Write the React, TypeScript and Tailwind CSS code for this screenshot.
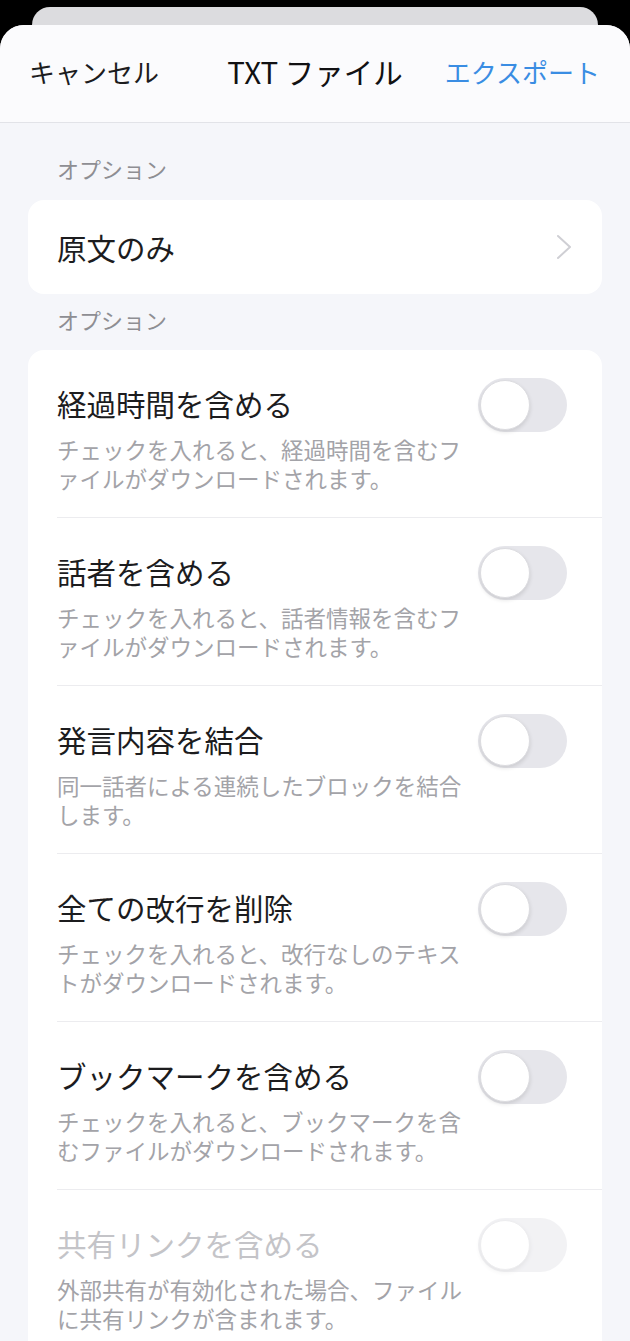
const FONT = { fontFamily: '"Noto Sans CJK JP", "Noto Sans", sans-serif' };

interface Option {
  title: string;
  desc: string;
  disabled?: boolean;
}

const options: Option[] = [
  { title: "経過時間を含める", desc: "チェックを入れると、経過時間を含むファイルがダウンロードされます。" },
  { title: "話者を含める", desc: "チェックを入れると、話者情報を含むファイルがダウンロードされます。" },
  { title: "発言内容を結合", desc: "同一話者による連続したブロックを結合します。" },
  { title: "全ての改行を削除", desc: "チェックを入れると、改行なしのテキストがダウンロードされます。" },
  { title: "ブックマークを含める", desc: "チェックを入れると、ブックマークを含むファイルがダウンロードされます。" },
  { title: "共有リンクを含める", desc: "外部共有が有効化された場合、ファイルに共有リンクが含まれます。", disabled: true },
];

function Toggle({ disabled }: { disabled?: boolean }) {
  return (
    <div
      className={`w-[89px] h-[54px] rounded-full bg-[#e6e6eb] p-[2px] flex items-center shrink-0 ${disabled ? "opacity-50" : ""}`}
    >
      <div className="w-[50px] h-[50px] rounded-full bg-white border border-[#dcdce0] shadow-[0_2px_4px_rgba(0,0,0,0.12)]" />
    </div>
  );
}

function SectionLabel({ className }: { className: string }) {
  return (
    <div className={`px-[57px] text-[22px] leading-[30px] text-[#8e8e93] ${className}`}>オプション</div>
  );
}

export default function App() {
  return (
    <div className="w-[630px] h-[1341px] overflow-hidden bg-black pt-[7px]" style={FONT}>
      {/* stacked sheet behind */}
      <div className="mx-[32px] h-[18px] rounded-t-[20px] bg-[#dcdcdf]" />

      <div className="rounded-t-[24px] bg-[#f5f6fa] h-full overflow-hidden">
        {/* Header */}
        <div className="h-[98px] bg-[#fbfbfd] border-b border-[#e2e3e8] flex items-center justify-between pl-[29px] pr-[30px] pb-[4px] relative">
          <span className="text-[26px] text-[#1c1c1e]">キャンセル</span>
          <span className="absolute left-1/2 -translate-x-1/2 text-[29.5px] text-[#111113]">
            TXT ファイル
          </span>
          <span className="text-[26px] text-[#3a8de3]">エクスポート</span>
        </div>

        <SectionLabel className="pt-[30px] pb-[17px]" />

        <div className="mx-[28px] h-[94px] rounded-[16px] bg-white flex items-center justify-between pl-[29px] pr-[30px]">
          <span className="text-[29.5px] text-[#1c1c1e]">原文のみ</span>
          <svg width="16" height="26" viewBox="0 0 16 26" fill="none">
            <polyline points="2,2 14,13 2,24" stroke="#cfcfd4" strokeWidth="2" strokeLinecap="round" strokeLinejoin="round" />
          </svg>
        </div>

        <SectionLabel className="pt-[10px] pb-[16px]" />

        <div className="mx-[28px] rounded-[16px] bg-white">
          {options.map((o) => (
            <div key={o.title} className="pl-[29px]">
              <div className="flex items-start border-b border-[#ececef] pr-[35px] pt-[33px] pb-[24px]">
                <div className="w-[420px]">
                  <div className={`text-[29.5px] leading-[40px] ${o.disabled ? "text-[#c4c4c8]" : "text-[#1c1c1e]"}`}>
                    {o.title}
                  </div>
                  <div className="mt-[12px] text-[22.5px] leading-[29px] text-[#a3a3a8]">{o.desc}</div>
                </div>
                <div className="ml-auto -mt-[5px]">
                  <Toggle disabled={o.disabled} />
                </div>
              </div>
            </div>
          ))}
        </div>
      </div>
    </div>
  );
}
